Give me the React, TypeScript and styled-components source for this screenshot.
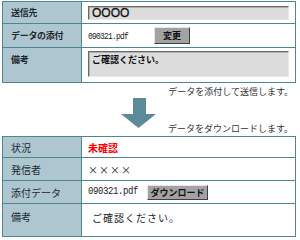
import React, { FC } from "react";
import styled, { createGlobalStyle } from "styled-components";

const GlobalStyle = createGlobalStyle`
  html, body {
    margin: 0;
    padding: 0;
    background: #fff;
  }
  body {
    font-family: "Noto Sans CJK JP", "DejaVu Sans", sans-serif;
    color: #222;
  }
`;

const Page = styled.div`
  width: 300px;
  height: 240px;
  padding: 1px 0 0 2px;
  box-sizing: border-box;
  overflow: hidden;
`;

const Form = styled.div<{ $rows: string }>`
  display: grid;
  grid-template-columns: 78px 1fr;
  grid-template-rows: ${(p) => p.$rows};
  gap: 1px;
  padding: 1px;
  width: 294px;
  box-sizing: border-box;
  background: #4f8694;
`;

const Label = styled.div<{ $bold?: boolean; $top?: boolean }>`
  background: #aec6d0;
  display: flex;
  align-items: ${(p) => (p.$top ? "flex-start" : "center")};
  padding: ${(p) => (p.$top ? "5px" : "0")} 0 0 8px;
  font-size: ${(p) => (p.$bold ? "9px" : "10px")};
  font-weight: ${(p) => (p.$bold ? 700 : 400)};
  color: #1d2a30;
  letter-spacing: ${(p) => (p.$bold ? "-0.3px" : "0")};
`;

const Value = styled.div<{ $top?: boolean }>`
  background: #fff;
  display: flex;
  align-items: ${(p) => (p.$top ? "flex-start" : "center")};
  padding: ${(p) => (p.$top ? "3px" : "0")} 4px 0 6px;
  font-size: 10px;
`;

const Field = styled.div<{ $tall?: boolean }>`
  flex: 1;
  height: ${(p) => (p.$tall ? "26px" : "14px")};
  margin-right: 2px;
  box-sizing: border-box;
  background: #dcdcdc;
  border: 1px solid;
  border-color: #6a6a6a #e8e8e8 #e8e8e8 #6a6a6a;
  box-shadow: inset 1px 1px 0 #b0b0b0;
  display: flex;
  align-items: ${(p) => (p.$tall ? "flex-start" : "center")};
  padding: ${(p) => (p.$tall ? "1px" : "0")} 3px 0;
  font-size: ${(p) => (p.$tall ? "9px" : "12px")};
  font-weight: ${(p) => (p.$tall ? 700 : 400)};
  color: #111;
  font-family: ${(p) =>
    p.$tall ? '"Noto Sans CJK JP", sans-serif' : '"Liberation Sans", sans-serif'};
  -webkit-text-stroke: ${(p) => (p.$tall ? "0" : "0.3px")};
`;

const FileName = styled.span<{ $big?: boolean }>`
  font-family: "Liberation Mono", monospace;
  font-size: ${(p) => (p.$big ? "9px" : "8px")};
  letter-spacing: ${(p) => (p.$big ? "-0.4px" : "-0.8px")};
  color: #222;
  transform: scaleY(1.2);
`;

const Button = styled.div<{ $w: number; $ml: number; $h: number }>`
  width: ${(p) => p.$w}px;
  height: ${(p) => p.$h}px;
  margin-left: ${(p) => p.$ml}px;
  box-sizing: border-box;
  background: #a2a2a2;
  border: 1px solid;
  border-color: #e6e6e6 #404040 #404040 #e6e6e6;
  display: flex;
  align-items: center;
  justify-content: center;
  font-size: 9px;
  font-weight: 700;
  color: #111;
`;

const Note = styled.div`
  font-size: 9px;
  color: #333;
  white-space: nowrap;
  line-height: 10px;
`;

const SendNote = styled(Note)`
  text-align: right;
  padding: 4px 7px 0 0;
`;

const Transition = styled.div`
  display: flex;
  align-items: flex-end;
  height: 39px;
  padding: 0 7px 2px 119px;
  box-sizing: border-box;
`;

const Arrow = styled.svg`
  align-self: flex-start;
  margin-top: 1px;
  flex: none;
`;

const DownloadNote = styled(Note)`
  margin-left: auto;
`;

const Red = styled.span`
  color: #f00;
  font-weight: 700;
  font-size: 10px;
`;

const Plain = styled.span<{ $indent?: boolean }>`
  font-size: 10px;
  color: #222;
  letter-spacing: 1px;
  padding: ${(p) => (p.$indent ? "3px 0 0 4px" : "0")};
`;

const App: FC = () => {
  return (
    <Page>
      <GlobalStyle />
      <Form $rows="21px 23px 34px">
        <Label $bold>送信先</Label>
        <Value>
          <Field>OOOO</Field>
        </Value>
        <Label $bold>データの添付</Label>
        <Value>
          <FileName>090321.pdf</FileName>
          <Button $w={36} $h={17} $ml={26}>
            変更
          </Button>
        </Value>
        <Label $bold $top>
          備考
        </Label>
        <Value $top>
          <Field $tall>ご確認ください。</Field>
        </Value>
      </Form>
      <SendNote>データを添付して送信します。</SendNote>
      <Transition>
        <Arrow width="35" height="30" viewBox="0 0 35 30">
          <polygon
            points="12,0 25,0 25,16 35,16 17.5,30 0,16 12,16"
            fill="#5b8b9a"
          />
        </Arrow>
        <DownloadNote>データをダウンロードします。</DownloadNote>
      </Transition>
      <Form $rows="20px 22px 22px 32px">
        <Label>状況</Label>
        <Value>
          <Red>未確認</Red>
        </Value>
        <Label>発信者</Label>
        <Value>
          <Plain>××××</Plain>
        </Value>
        <Label>添付データ</Label>
        <Value>
          <FileName $big>090321.pdf</FileName>
          <Button $w={61} $h={15} $ml={9}>
            ダウンロード
          </Button>
        </Value>
        <Label $top>備考</Label>
        <Value $top>
          <Plain $indent>ご確認ください。</Plain>
        </Value>
      </Form>
    </Page>
  );
};

export default App;
